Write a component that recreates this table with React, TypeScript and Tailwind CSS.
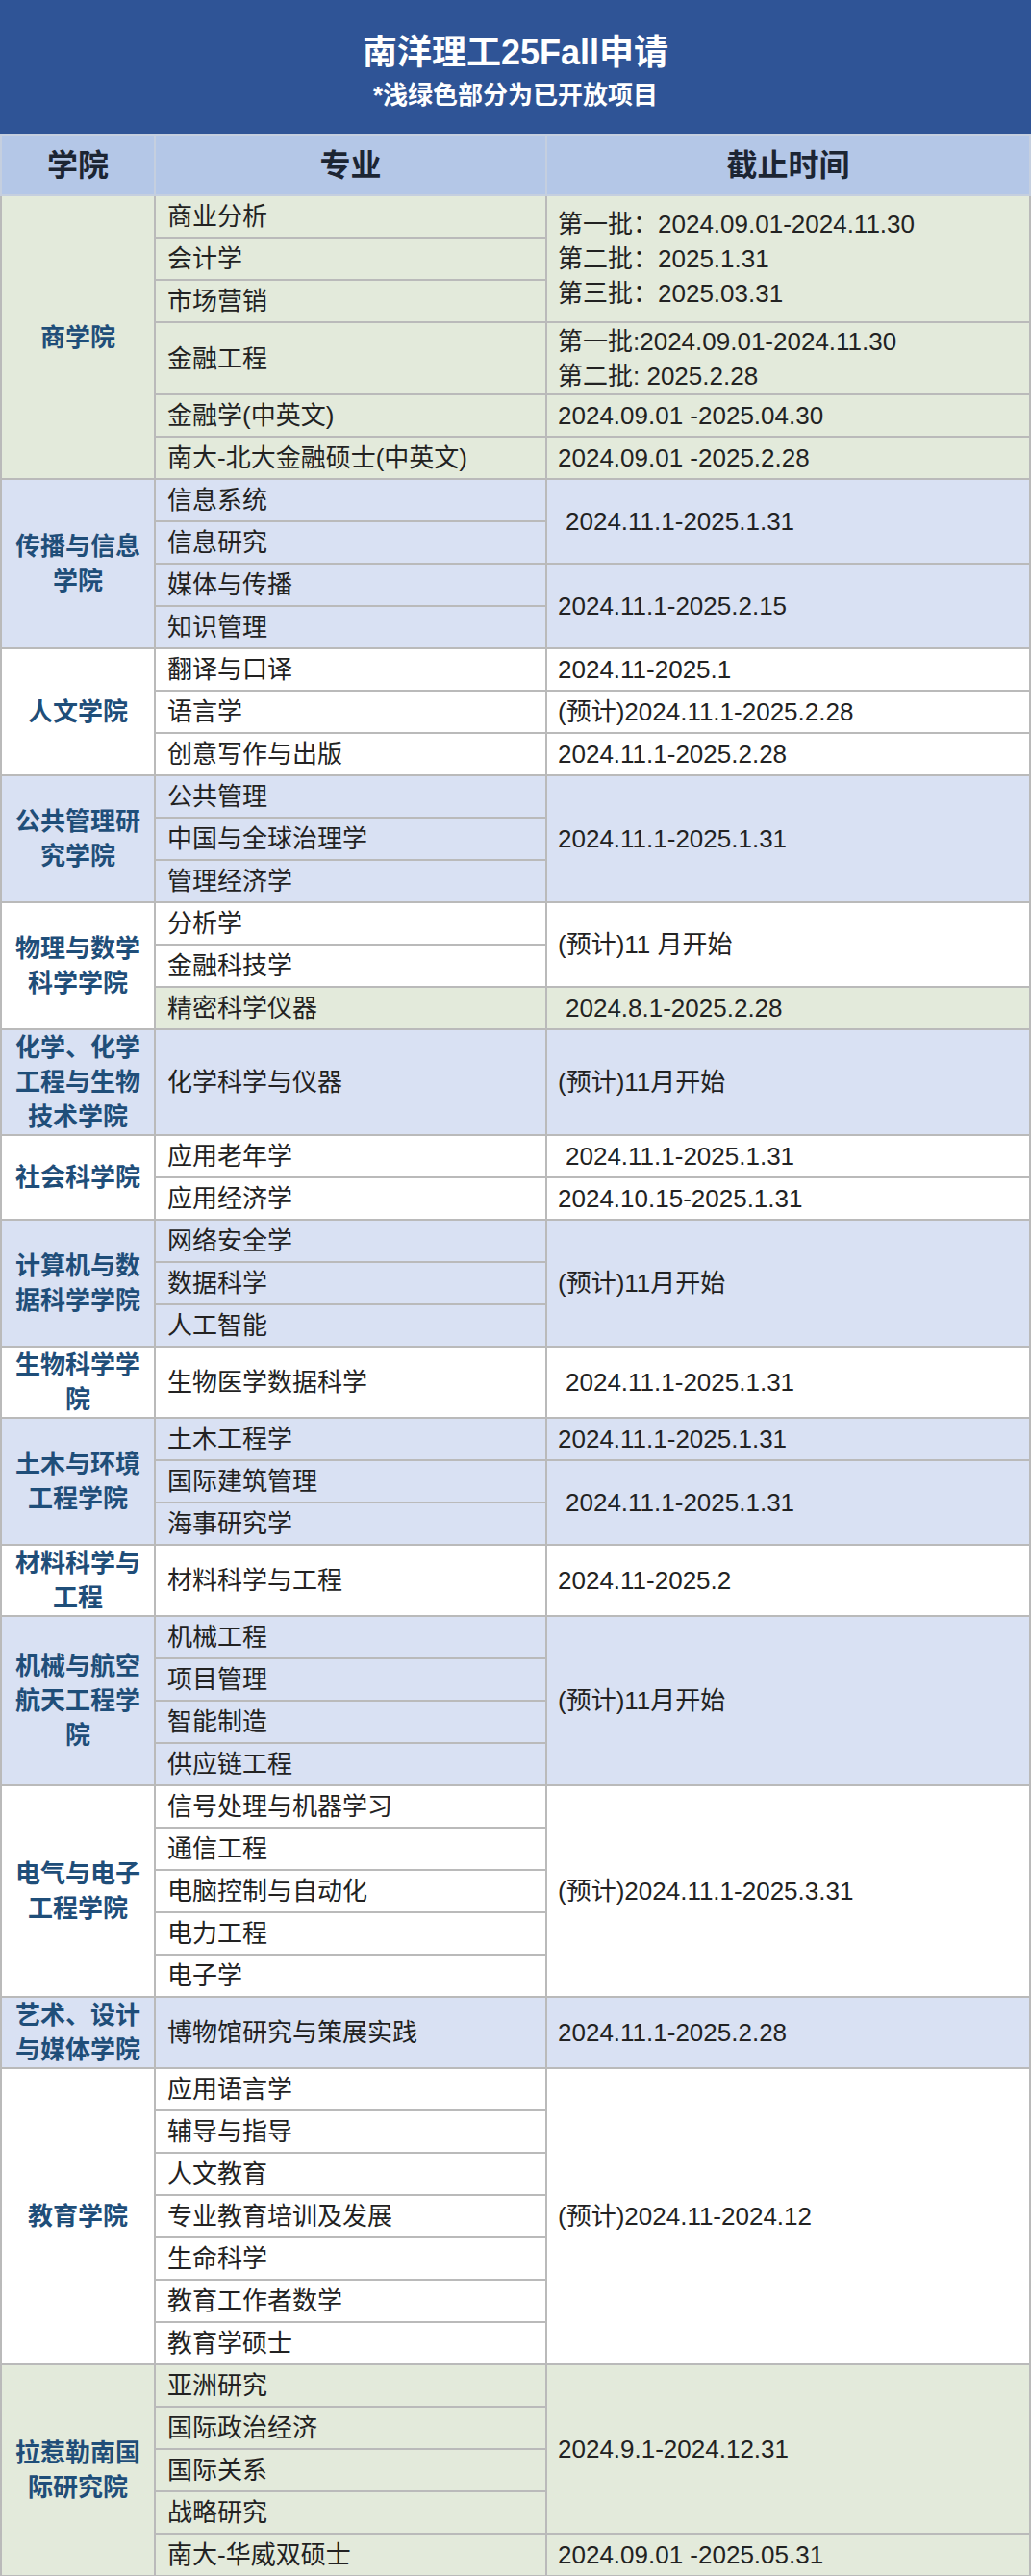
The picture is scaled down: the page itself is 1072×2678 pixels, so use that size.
import React from 'react';

type DateCell = { lines: string[]; span?: number; indent?: boolean };

type Row = {
  major: string;
  h?: string;
  date?: DateCell;
  green?: boolean;
};

type Group = {
  college: string[];
  bg: string;
  rows: Row[];
};

const GREEN = 'bg-[#e3eadb]';
const BLUE = 'bg-[#d9e1f3]';
const WHITE = 'bg-white';

const groups: Group[] = [
  {
    college: ['商学院'],
    bg: GREEN,
    rows: [
      {
        major: '商业分析',
        date: {
          lines: ['第一批：2024.09.01-2024.11.30', '第二批：2025.1.31', '第三批：2025.03.31'],
          span: 3,
        },
      },
      { major: '会计学' },
      { major: '市场营销' },
      {
        major: '金融工程',
        h: 'h-[75px]',
        date: { lines: ['第一批:2024.09.01-2024.11.30', '第二批: 2025.2.28'] },
      },
      { major: '金融学(中英文)', date: { lines: ['2024.09.01 -2025.04.30'] } },
      { major: '南大-北大金融硕士(中英文)', date: { lines: ['2024.09.01 -2025.2.28'] } },
    ],
  },
  {
    college: ['传播与信息', '学院'],
    bg: BLUE,
    rows: [
      { major: '信息系统', date: { lines: ['2024.11.1-2025.1.31'], span: 2, indent: true } },
      { major: '信息研究' },
      { major: '媒体与传播', date: { lines: ['2024.11.1-2025.2.15'], span: 2 } },
      { major: '知识管理' },
    ],
  },
  {
    college: ['人文学院'],
    bg: WHITE,
    rows: [
      { major: '翻译与口译', date: { lines: ['2024.11-2025.1'] } },
      { major: '语言学', date: { lines: ['(预计)2024.11.1-2025.2.28'] } },
      { major: '创意写作与出版', date: { lines: ['2024.11.1-2025.2.28'] } },
    ],
  },
  {
    college: ['公共管理研', '究学院'],
    bg: BLUE,
    rows: [
      { major: '公共管理', date: { lines: ['2024.11.1-2025.1.31'], span: 3 } },
      { major: '中国与全球治理学' },
      { major: '管理经济学' },
    ],
  },
  {
    college: ['物理与数学', '科学学院'],
    bg: WHITE,
    rows: [
      { major: '分析学', date: { lines: ['(预计)11 月开始'], span: 2 } },
      { major: '金融科技学' },
      { major: '精密科学仪器', green: true, date: { lines: ['2024.8.1-2025.2.28'], indent: true } },
    ],
  },
  {
    college: ['化学、化学', '工程与生物', '技术学院'],
    bg: BLUE,
    rows: [{ major: '化学科学与仪器', h: 'h-[110px]', date: { lines: ['(预计)11月开始'] } }],
  },
  {
    college: ['社会科学院'],
    bg: WHITE,
    rows: [
      { major: '应用老年学', date: { lines: ['2024.11.1-2025.1.31'], indent: true } },
      { major: '应用经济学', date: { lines: ['2024.10.15-2025.1.31'] } },
    ],
  },
  {
    college: ['计算机与数', '据科学学院'],
    bg: BLUE,
    rows: [
      { major: '网络安全学', date: { lines: ['(预计)11月开始'], span: 3 } },
      { major: '数据科学' },
      { major: '人工智能' },
    ],
  },
  {
    college: ['生物科学学', '院'],
    bg: WHITE,
    rows: [
      { major: '生物医学数据科学', h: 'h-[73px]', date: { lines: ['2024.11.1-2025.1.31'], indent: true } },
    ],
  },
  {
    college: ['土木与环境', '工程学院'],
    bg: BLUE,
    rows: [
      { major: '土木工程学', date: { lines: ['2024.11.1-2025.1.31'] } },
      { major: '国际建筑管理', date: { lines: ['2024.11.1-2025.1.31'], span: 2, indent: true } },
      { major: '海事研究学' },
    ],
  },
  {
    college: ['材料科学与', '工程'],
    bg: WHITE,
    rows: [{ major: '材料科学与工程', h: 'h-[74px]', date: { lines: ['2024.11-2025.2'] } }],
  },
  {
    college: ['机械与航空', '航天工程学', '院'],
    bg: BLUE,
    rows: [
      { major: '机械工程', date: { lines: ['(预计)11月开始'], span: 4 } },
      { major: '项目管理' },
      { major: '智能制造' },
      { major: '供应链工程' },
    ],
  },
  {
    college: ['电气与电子', '工程学院'],
    bg: WHITE,
    rows: [
      { major: '信号处理与机器学习', date: { lines: ['(预计)2024.11.1-2025.3.31'], span: 5 } },
      { major: '通信工程' },
      { major: '电脑控制与自动化' },
      { major: '电力工程' },
      { major: '电子学' },
    ],
  },
  {
    college: ['艺术、设计', '与媒体学院'],
    bg: BLUE,
    rows: [{ major: '博物馆研究与策展实践', h: 'h-[74px]', date: { lines: ['2024.11.1-2025.2.28'] } }],
  },
  {
    college: ['教育学院'],
    bg: WHITE,
    rows: [
      { major: '应用语言学', date: { lines: ['(预计)2024.11-2024.12'], span: 7 } },
      { major: '辅导与指导' },
      { major: '人文教育' },
      { major: '专业教育培训及发展' },
      { major: '生命科学' },
      { major: '教育工作者数学' },
      { major: '教育学硕士' },
    ],
  },
  {
    college: ['拉惹勒南国', '际研究院'],
    bg: GREEN,
    rows: [
      { major: '亚洲研究', date: { lines: ['2024.9.1-2024.12.31'], span: 4 } },
      { major: '国际政治经济' },
      { major: '国际关系' },
      { major: '战略研究' },
      { major: '南大-华威双硕士', date: { lines: ['2024.09.01 -2025.05.31'] } },
    ],
  },
];

const cell = 'border-2 border-[#bababa]';

export default function App() {
  return (
    <div className="w-[1072px] bg-[#c4c4c4] font-['Liberation_Sans','Noto_Sans_CJK_SC',sans-serif]">
      <div className="h-[139px] bg-[#2f5496] text-white text-center">
        <div className="pt-[33px] text-[36px] leading-[44px] font-bold">南洋理工25Fall申请</div>
        <div className="mt-[6px] text-[26px] leading-[32px] font-bold">*浅绿色部分为已开放项目</div>
      </div>

      <table className="w-full table-fixed border-collapse">
        <colgroup>
          <col className="w-[160px]" />
          <col className="w-[407px]" />
          <col />
        </colgroup>
        <thead>
          <tr className="h-[63px] bg-[#b4c7e7] text-[32px] font-bold text-[#1c2533]">
            <th className="border-2 border-[#c5cfdf]">学院</th>
            <th className="border-2 border-[#c5cfdf]">专业</th>
            <th className="border-2 border-[#c5cfdf]">截止时间</th>
          </tr>
        </thead>
        <tbody>
          {groups.map((g) =>
            g.rows.map((r, i) => {
              const rowBg = r.green ? GREEN : g.bg;
              return (
                <tr key={g.college.join('') + r.major} className={r.h ?? 'h-[44px]'}>
                  {i === 0 && (
                    <td
                      rowSpan={g.rows.length}
                      className={`${cell} ${g.bg} px-1 text-center text-[26px] leading-[36px] font-bold text-[#1f4e79]`}
                    >
                      {g.college.map((line) => (
                        <div key={line}>{line}</div>
                      ))}
                    </td>
                  )}
                  <td className={`${cell} ${rowBg} px-3 text-[26px] leading-[36px] text-[#222222] whitespace-nowrap`}>
                    {r.major}
                  </td>
                  {r.date && (
                    <td
                      rowSpan={r.date.span ?? 1}
                      className={`${cell} ${rowBg} ${r.date.indent ? 'pl-[19px]' : 'pl-[11px]'} text-[26px] leading-[36px] text-[#222222] whitespace-nowrap`}
                    >
                      {r.date.lines.map((line) => (
                        <div key={line}>{line}</div>
                      ))}
                    </td>
                  )}
                </tr>
              );
            })
          )}
        </tbody>
      </table>
    </div>
  );
}
